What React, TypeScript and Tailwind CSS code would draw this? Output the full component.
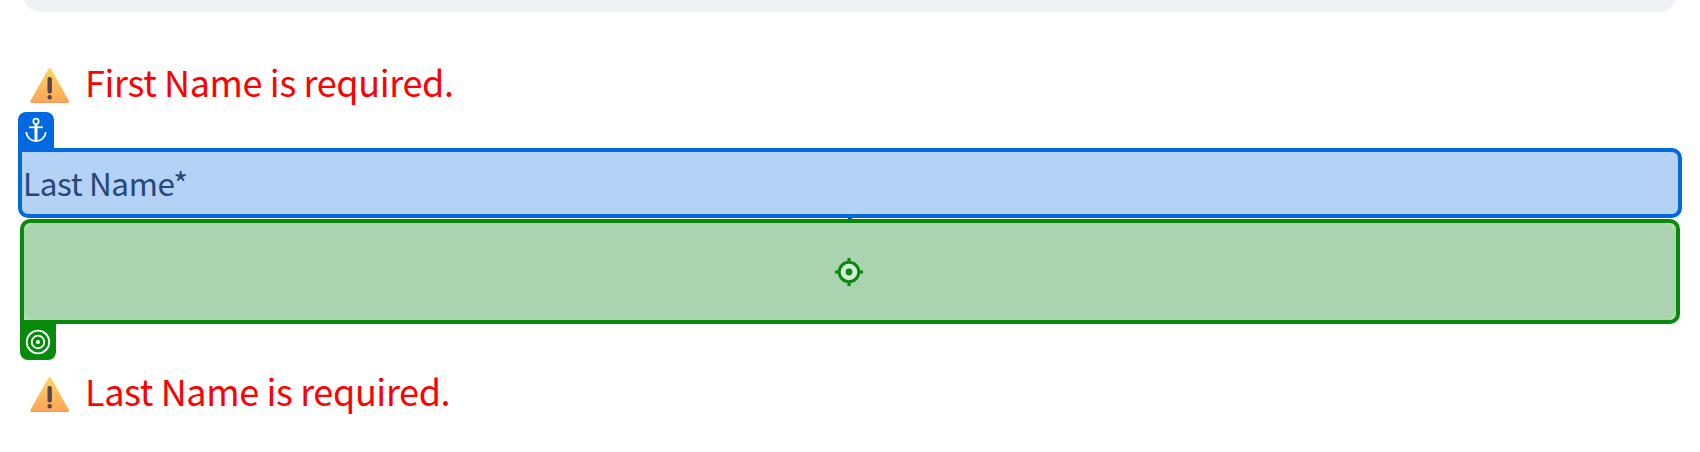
import React from "react";

function WarningIcon() {
  return (
    <svg width="40" height="36" viewBox="0 0 40 36" className="mt-[2px] block shrink-0">
      <defs>
        <linearGradient id="warn" x1="0" y1="0" x2="0" y2="1">
          <stop offset="0" stopColor="#ffd75e" />
          <stop offset="0.5" stopColor="#fdbc5c" />
          <stop offset="1" stopColor="#fda456" />
        </linearGradient>
      </defs>
      <path d="M18.3 1.1Q19.7-.9 21.1 1.1L38.8 32.8Q39.6 34.9 37.6 35H1.7Q-.3 34.9.5 32.8Z" fill="url(#warn)" />
      <path d="M1 34.5H38.3" stroke="#e99f62" strokeWidth="1" />
      <rect x="17.5" y="9" width="4.4" height="16.6" rx="2" fill="#504654" />
      <circle cx="19.7" cy="29.2" r="2.2" fill="#504654" />
    </svg>
  );
}

function ErrorMessage({ text }: { text: string }) {
  return (
    <div className="flex h-[52px] items-center pl-[30px]">
      <WarningIcon />
      <p className="mb-[8px] ml-[15px] whitespace-nowrap text-[36px] leading-[52px] tracking-[-0.37px] text-[#ff0000]">{text}</p>
    </div>
  );
}

function AnchorIcon() {
  return (
    <svg width="24" height="28" viewBox="0 0 24 28" fill="none" stroke="#fff" className="block">
      <circle cx="12" cy="5.3" r="2.7" strokeWidth="1.7" />
      <path d="M12 8V25" strokeWidth="3" />
      <path d="M5 11.3H19" strokeWidth="1.7" />
      <path d="M2.2 16C2.8 21.6 7 25.2 12 25.2S21.2 21.6 21.8 16" strokeWidth="1.8" />
    </svg>
  );
}

function TargetIcon() {
  return (
    <svg width="26" height="26" viewBox="0 0 26 26" fill="none" stroke="#fff" className="block">
      <circle cx="13" cy="13" r="11.3" strokeWidth="1.8" />
      <circle cx="13" cy="13" r="6.3" strokeWidth="1.8" />
      <circle cx="13" cy="13" r="2" fill="#fff" stroke="none" />
    </svg>
  );
}

function CrosshairIcon() {
  return (
    <svg width="28" height="28" viewBox="0 0 28 28" fill="none" stroke="#088a0c" className="relative mr-[2px] block">
      <path d="M14 0V5M14 23V28M0 14H5M23 14H28" strokeWidth="3.2" />
      <circle cx="14" cy="14" r="9.8" fill="#d6ead9" strokeWidth="3" />
      <circle cx="14" cy="14" r="3.4" fill="#088a0c" stroke="none" />
    </svg>
  );
}

export default function App() {
  return (
    <main className="h-[452px] w-[1700px] overflow-hidden bg-white font-['Noto_Sans_CJK_SC',sans-serif]">
      <div className="h-[12px] overflow-hidden px-[22px]">
        <div className="-mt-[48px] h-[60px] rounded-[20px] bg-[#f0f1f5]" />
      </div>
      <div className="pt-[47px]">
        <ErrorMessage text="First Name is required." />
      </div>
      <div className="ml-[18px] mt-[1px] flex h-[36px] w-[36px] justify-center rounded-t-[8px] bg-[#0069e0] pt-[4px]">
        <AnchorIcon />
      </div>
      <section className="relative ml-[18px] flex h-[70px] w-[1664px] items-center rounded-[10px] rounded-tl-none border-4 border-[#0069e0] bg-[#b4d2f6]">
        <label className="mb-[2px] ml-[1px] whitespace-nowrap text-[31.5px] leading-[46px] tracking-[-0.38px] text-[#26477a]">Last Name*</label>
        <span className="absolute -bottom-[5px] left-[826px] h-[2px] w-[4px] bg-[#0b5aa0]" />
      </section>
      <section className="relative ml-[20px] mt-[1px] flex h-[105px] w-[1660px] items-center justify-center overflow-hidden rounded-[10px] rounded-bl-none border-4 border-[#088a0c] bg-[#b5dcb5]">
        <div className="absolute -inset-[2px] rounded-[20px] bg-[#aad4b0]" />
        <CrosshairIcon />
      </section>
      <div className="ml-[20px] flex h-[36px] w-[36px] justify-center rounded-b-[8px] bg-[#088a0c] pt-[5px]">
        <TargetIcon />
      </div>
      <div className="pt-[8px]">
        <ErrorMessage text="Last Name is required." />
      </div>
    </main>
  );
}
